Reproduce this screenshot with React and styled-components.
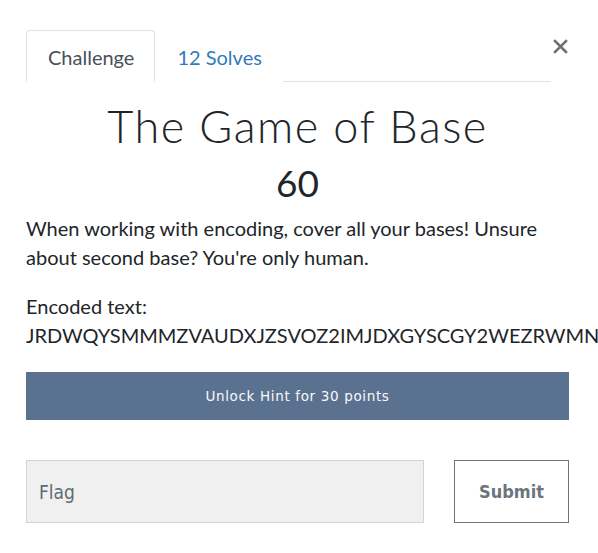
import React from "react";
import styled, { createGlobalStyle } from "styled-components";

const Global = createGlobalStyle`
  html, body { margin: 0; padding: 0; background: #fff; overflow: hidden; }
  body { font-family: Lato, "Noto Sans", sans-serif; color: #212529; }
  * { box-sizing: border-box; }
`;

const Modal = styled.div`
  width: 598px;
  height: 553px;
  padding: 30px 29px 0 26px;
  display: flex;
  flex-direction: column;
  overflow: hidden;
`;

const Header = styled.div`
  display: flex;
  align-items: flex-start;
`;

const Tabs = styled.div`
  flex: 0 0 525px;
  display: flex;
  border-bottom: 1px solid #dee2e6;
  height: 52px;
`;

const Tab = styled.div`
  height: 52px;
  padding: 1px 20px 0 21px;
  display: flex;
  align-items: center;
  font-size: 20px;
  color: ${(p) => (p.$active ? "#495057" : "#337ab7")};
  border: 1px solid ${(p) => (p.$active ? "#dee2e6" : "transparent")};
  border-bottom-color: ${(p) => (p.$active ? "#fff" : "transparent")};
  border-radius: 4px 4px 0 0;
  background: #fff;
  margin-bottom: -1px;
`;

const Close = styled.button`
  margin-left: 1px;
  margin-top: 2px;
  width: 20px;
  height: 28px;
  border: 0;
  background: none;
  padding: 0;
  display: flex;
  align-items: center;
  justify-content: center;
  cursor: pointer;
`;

const Title = styled.h1`
  margin: 18px 0 0;
  font-family: Lato, sans-serif;
  font-weight: 300;
  font-size: 45px;
  line-height: 52px;
  letter-spacing: 1.5px;
  text-align: center;
  color: #212529;
`;

const Value = styled.div`
  margin-top: 9px;
  font-size: 37px;
  line-height: 44px;
  text-align: center;
  color: #212529;
`;

const Description = styled.div`
  margin-top: 9px;
  font-size: 20px;
  line-height: 29px;
`;

const Para = styled.p`
  margin: 0 0 ${(p) => p.$mb ?? 20}px;
`;

const Code = styled.span`
  white-space: nowrap;
`;

const HintButton = styled.button`
  margin-top: 22px;
  width: 543px;
  height: 48px;
  flex: 0 0 48px;
  border: 0;
  background: #5b7190;
  color: #f8f9fa;
  font-family: "DejaVu Sans", sans-serif;
  font-size: 13.5px;
  letter-spacing: 0.65px;
  cursor: pointer;
`;

const FlagRow = styled.div`
  margin-top: 40px;
  display: flex;
  gap: 30px;
`;

const FlagInput = styled.input`
  width: 398px;
  height: 63px;
  background: #f0f0f0;
  border: 1px solid #ced4da;
  padding: 0 12px;
  font-family: "Liberation Sans Narrow", "DejaVu Sans Condensed", sans-serif;
  font-size: 19px;
  color: #495057;
  outline: none;
  &::placeholder { color: #5f6a74; opacity: 1; }
`;

const SubmitButton = styled.button`
  width: 115px;
  height: 63px;
  background: #fff;
  border: 1px solid #6c757d;
  color: #6c757d;
  font-family: "DejaVu Sans Condensed", "DejaVu Sans", sans-serif;
  font-weight: bold;
  font-size: 18px;
  cursor: pointer;
`;

export default function App() {
  return (
    <>
      <Global />
      <Modal>
        <Header>
          <Tabs>
            <Tab $active>Challenge</Tab>
            <Tab>12 Solves</Tab>
          </Tabs>
          <Close aria-label="Close">
            <svg width="15" height="15" viewBox="0 0 15 15">
              <path d="M2 2 L13 13 M13 2 L2 13" stroke="#707070" strokeWidth="2.6" strokeLinecap="square" />
            </svg>
          </Close>
        </Header>
        <Title>The Game of Base</Title>
        <Value>60</Value>
        <Description>
          <Para>
            When working with encoding, cover all your bases! Unsure about second base? You're only human.
          </Para>
          <Para $mb={0}>
            Encoded text:
            <br />
            <Code>JRDWQYSMMMZVAUDXJZSVOZ2IMJDXGYSCGY2WEZRWMNXXQZLSMVXGOZLTOQ======</Code>
          </Para>
        </Description>
        <HintButton>Unlock Hint for 30 points</HintButton>
        <FlagRow>
          <FlagInput placeholder="Flag" />
          <SubmitButton>Submit</SubmitButton>
        </FlagRow>
      </Modal>
    </>
  );
}
